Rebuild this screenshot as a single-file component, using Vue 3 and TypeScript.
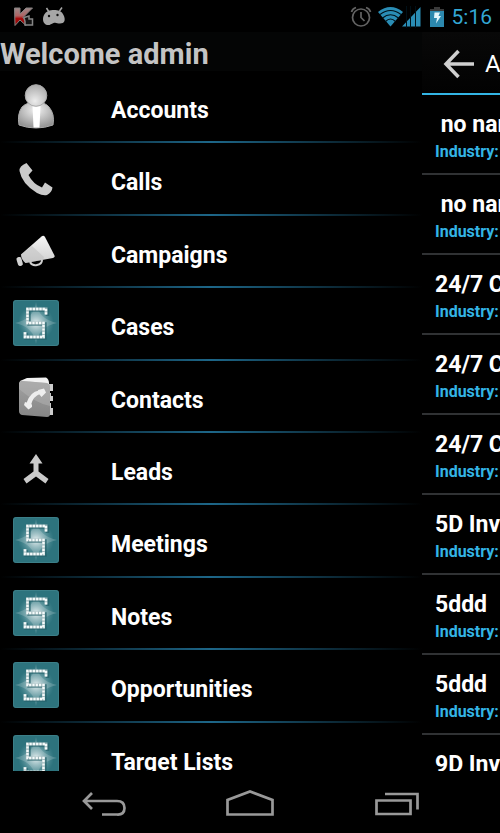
<script setup lang="ts">
interface MenuItem {
  label: string
  icon: 'person' | 'phone' | 'horn' | 'sugar' | 'book' | 'merge'
}

const menu: MenuItem[] = [
  { label: 'Accounts', icon: 'person' },
  { label: 'Calls', icon: 'phone' },
  { label: 'Campaigns', icon: 'horn' },
  { label: 'Cases', icon: 'sugar' },
  { label: 'Contacts', icon: 'book' },
  { label: 'Leads', icon: 'merge' },
  { label: 'Meetings', icon: 'sugar' },
  { label: 'Notes', icon: 'sugar' },
  { label: 'Opportunities', icon: 'sugar' },
  { label: 'Target Lists', icon: 'sugar' },
]

const accounts: string[] = [' no name', ' no name', '24/7 C', '24/7 C', '24/7 C', '5D Inv', '5ddd', '5ddd', '9D Inv']
</script>

<template>
  <div class="screen">
    <svg class="defs" width="0" height="0" aria-hidden="true">
      <defs>
        <linearGradient id="red" x1="0" y1="0" x2="0" y2="1">
          <stop offset="0" stop-color="#9c8a8a" /><stop offset=".45" stop-color="#b06464" /><stop offset=".6" stop-color="#a80c0c" /><stop offset="1" stop-color="#8c0808" />
        </linearGradient>
        <radialGradient id="head" cx=".45" cy=".75" r=".8">
          <stop offset="0" stop-color="#ececec" /><stop offset="1" stop-color="#a6a6a6" />
        </radialGradient>
        <radialGradient id="torso" cx=".5" cy=".3" r=".75">
          <stop offset="0" stop-color="#f2f2f2" /><stop offset="1" stop-color="#8c8c8c" />
        </radialGradient>
        <linearGradient id="cone" x1="0" y1="0" x2="0" y2="1">
          <stop offset="0" stop-color="#f6f6f6" /><stop offset="1" stop-color="#cfcfcf" />
        </linearGradient>
        <linearGradient id="cover" x1="0" y1="0" x2="0" y2="1">
          <stop offset="0" stop-color="#a2a2a2" /><stop offset="1" stop-color="#868686" />
        </linearGradient>
        <radialGradient id="glow">
          <stop offset="0" stop-color="#fff" stop-opacity=".85" /><stop offset=".5" stop-color="#d4e8ea" stop-opacity=".4" /><stop offset="1" stop-color="#7fb2b8" stop-opacity="0" />
        </radialGradient>
      </defs>
    </svg>

    <header class="status">
      <svg width="20" height="20" viewBox="0 0 20 20" aria-hidden="true">
        <path d="M.5 1H6V7L12 1H18.500L9 10.500 12 14V18.500L6 13 1 18.500Z" fill="url(#red)" stroke="#858080" />
        <path d="M10 10.500 15 9V12H18.500V18H11V14.500Z" fill="#111" stroke="#858585" stroke-width="1.500" />
      </svg>
      <svg width="24" height="20" viewBox="0 0 24 20" aria-hidden="true">
        <path d="M4.500 1 7 5M20 .5 17.500 4" stroke="#a6a6a6" stroke-width="1.500" />
        <path d="M2 8C4 4 8 3 12 3S20 4 21.500 8C24 13 22.500 16.500 18 16.500 15 16.500 14 15 11.500 16S8 18.500 5 18C1 17 0 12 2 8Z" fill="#a6a6a6" />
        <circle cx="7" cy="9" r="1.200" fill="#111" /><circle cx="15.500" cy="8" r="1.200" fill="#111" />
      </svg>
      <span class="spacer"></span>
      <svg width="22" height="22" viewBox="0 0 22 22" fill="none" stroke="#636363" stroke-width="1.700" aria-hidden="true">
        <circle cx="11" cy="11.500" r="8.500" /><path d="M11 6V11.500L14.500 15M1.500 6Q2.500 2.500 6 1.500M20.500 6Q19.500 2.500 16 1.500" />
      </svg>
      <svg class="wifi" width="45" height="22" viewBox="0 0 45 22" aria-hidden="true">
        <path d="M1 6Q13.500-4 26 6L13.500 20.500Z" fill="#2a8db5" />
        <path d="M3 8.500Q13.500.5 24 8.500M5.500 12Q13.500 5.500 21.500 12M8.500 15.500Q13.500 10.500 18.500 15.500" fill="none" stroke="#001018" stroke-width="1.100" />
        <path d="M25 20.500 43.500 1V20.500Z" fill="#2a8db5" />
        <path d="M29.500 0V22M33.500 0V22M38.500 0V22" stroke="#001018" stroke-width="1" />
      </svg>
      <svg width="14" height="22" viewBox="0 0 14 22" aria-hidden="true">
        <path d="M4 1H10V3H14V7H0V3H4Z" fill="#3a3a3a" /><path d="M0 5H14V21H0Z" fill="#2c88ae" />
        <path d="M4.500 6.500H10L8.500 10H11L6 17.500 7 12H4Z" fill="#e2f5fb" />
      </svg>
      <time class="clock">5:16</time>
    </header>

    <main class="body">
      <nav class="drawer" aria-label="Modules">
        <h1 class="welcome">Welcome admin</h1>
        <ul class="menu">
          <li v-for="item in menu" :key="item.label">
            <a class="menu-link" :href="'#' + item.label">
              <svg class="menu-icon" width="46" height="46" viewBox="0 0 46 46" aria-hidden="true">
                <g v-if="item.icon === 'person'">
                  <path d="M6 42Q4 31 9 24Q14 19 23 19T36 24Q42 31 40 42Q32 45 23 45T6 42Z" fill="url(#torso)" stroke="#aaa" />
                  <path d="M19.500 23H27.500L26.500 44.500H20.500Z" fill="#fff" />
                  <circle cx="23" cy="12.500" r="10.800" fill="url(#head)" stroke="#aaa" />
                </g>
                <path v-else-if="item.icon === 'phone'" d="M13.500 8 19.500 15.500 15.500 20Q20 29 29 32.500L32 27.500 39.500 32.500Q39 37 34 40Q30 41 24 38Q9 29 6.500 16Q6 11 13.500 8Z" fill="#cacaca" />
                <g v-else-if="item.icon === 'horn'">
                  <path d="M8 26.500 28.500 8.500Q30.500 7 32 9L41.500 27.500Q42 29.500 40 30L12.500 35Q8.500 32 8 26.500Z" fill="url(#cone)" />
                  <path d="M8 26.500 19 18 31 29 30 32 12.500 35Q8.500 32 8 26.500Z" fill="#bdbdbd" opacity=".5" />
                  <path d="M17 34Q19 38 24 37Q29 36 29 32" fill="none" stroke="#cfcfcf" stroke-width="2" />
                  <rect x="4" y="29" width="5" height="9" rx="2" fill="#d1d1d1" transform="rotate(-17 6.500 33)" />
                </g>
                <g v-else-if="item.icon === 'book'">
                  <path d="M7 8 14 5 33 4.500Q36 6 36 10V40H8Z" fill="#f1f1f1" />
                  <path d="M35 11H40V18H35ZM35 20H38V23H40V28H35ZM35 30H38V35H40V42H35Z" fill="#cdcdcd" />
                  <path d="M6 10Q7 7 10 8L34 10Q37 11 37 14V41Q37 44 34 44L9 42Q6 41 6 38Z" fill="url(#cover)" />
                  <path d="M6 16V10Q7 7 10 8L34 10Q37 11 37 14V33Q22 30 6 16Z" fill="#b7b7b7" opacity=".45" />
                  <path d="M12 29 19 31.500 19 34 15.500 36.500 11 32ZM13.500 30Q17 19 26 17.500L28 20.500Q20 23 18 32ZM25 17 31 15.500 33 19.500 28.500 24 26 21Z" fill="#eee" />
                </g>
                <path v-else-if="item.icon === 'merge'" d="M23 9 29.500 18.500H25.500V26.500L35.500 34 32.500 38.500 23 31.500 13.500 38.500 10.500 34 20.500 26.500V18.500H16.500Z" fill="#cacaca" />
                <g v-else>
                  <rect width="46" height="46" rx="3" fill="#2d737d" /><rect x=".5" y=".5" width="45" height="45" rx="3" fill="none" stroke="#3c7f88" />
                  <circle cx="23" cy="23" r="18" fill="url(#glow)" />
                  <path d="M23 2Q25 19 44 23Q25 27 23 44Q21 27 2 23Q21 19 23 2Z" fill="#fff" opacity=".18" />
                  <path d="M34.500 16V10H16V24H32V38H13V33" fill="none" stroke="#245f68" stroke-width="3.500" opacity=".7" />
                  <path d="M33 14.500V9H14.500V23H30.500V37H12V32" fill="none" stroke="#9fb8bb" stroke-width="3" />
                  <path d="M33 14.500V9H14.500V23H30.500V37H12V32" fill="none" stroke="#f4fafa" stroke-width="2.400" stroke-dasharray="2.200 1.100" />
                </g>
              </svg>
              <span>{{ item.label }}</span>
            </a>
          </li>
        </ul>
      </nav>

      <section class="panel" aria-label="Accounts">
        <div class="bar">
          <button class="back" type="button" aria-label="Back">
            <svg width="32" height="30" viewBox="0 0 32 30" fill="none" stroke="#d0d0d0" stroke-width="3.500">
              <path d="M15.500 2 3 15 15.500 28M3 15H31" />
            </svg>
          </button>
          <h2>Accounts</h2>
        </div>
        <ul class="accounts">
          <li v-for="(name, i) in accounts" :key="i">
            <strong>{{ name }}</strong>
            <span>Industry:</span>
          </li>
        </ul>
      </section>
    </main>

    <footer class="keys">
      <button type="button" aria-label="Back">
        <svg width="46" height="30" viewBox="0 0 46 30" fill="none" stroke="#999" stroke-width="2.700">
          <path d="M11 5 3 13 11 21M3 13H36Q43.500 13 43.500 20T36 26.500H21" />
        </svg>
      </button>
      <button type="button" aria-label="Home">
        <svg width="50" height="30" viewBox="0 0 50 30" fill="none" stroke="#999" stroke-width="2.700">
          <path d="M2.500 26.500V12L25 3.500 47.500 12V26.500Z" />
        </svg>
      </button>
      <button type="button" aria-label="Recent apps">
        <svg width="46" height="30" viewBox="0 0 46 30" fill="none" stroke="#999" stroke-width="2.700">
          <path d="M3.500 12.500H37.500V26H3.500ZM12 6H44.500V21.500" />
        </svg>
      </button>
    </footer>
  </div>
</template>

<style>
body {
  margin: 0;
  background: #000;
}
</style>

<style scoped>
.screen {
  display: flex;
  flex-direction: column;
  height: 100vh;
  overflow: hidden;
  background: #000;
  color: #fff;
  font-family: Roboto, "Liberation Sans", sans-serif;
}
.defs {
  position: absolute;
}
svg {
  display: block;
  flex: none;
}
h1, h2, ul {
  margin: 0;
  padding: 0;
}
ul {
  list-style: none;
}
button {
  padding: 0;
  border: 0;
  background: none;
}
.status {
  display: flex;
  flex: none;
  align-items: center;
  gap: 8px;
  box-sizing: border-box;
  height: 32px;
  padding: 2px 8px 0 14px;
}
.spacer {
  flex: 1;
}
.wifi {
  margin-left: -3px;
}
.clock {
  color: #33a7d4;
  font-size: 21px;
  line-height: 30px;
}
.body {
  display: flex;
  flex: 1;
  min-height: 0;
  overflow: hidden;
}
.drawer {
  flex: 1;
  min-width: 0;
}
.welcome {
  height: 39px;
  background: #040505;
  color: #c4c4c4;
  font-size: 29px;
  font-weight: 700;
  line-height: 44px;
}
.menu {
  display: grid;
  grid-auto-rows: 1fr;
  min-height: 724px;
}
.menu li {
  background: linear-gradient(90deg, transparent, #1d6688 50%, transparent) bottom / 100% 2px no-repeat;
}
.menu-link {
  display: flex;
  gap: 52px;
  padding: 12px 13px 0;
  color: #fff;
  font-size: 23px;
  font-weight: 700;
  line-height: 56px;
  text-decoration: none;
}
.panel {
  flex: none;
  width: 78px;
  overflow: hidden;
  white-space: nowrap;
}
.bar {
  display: flex;
  align-items: center;
  gap: 10px;
  box-sizing: border-box;
  height: 63px;
  padding: 3px 0 0 21px;
  border-bottom: 2px solid #33b5e5;
  background: linear-gradient(#080808, #020202);
}
.bar h2 {
  font-size: 24px;
  font-weight: 400;
}
.accounts li {
  box-sizing: border-box;
  height: 80px;
  padding: 16px 0 0 13px;
  border-bottom: 2px solid #303234;
}
.accounts strong,
.accounts span {
  display: block;
  font-weight: 700;
}
.accounts strong {
  font-size: 23px;
  line-height: 28px;
  white-space: pre;
}
.accounts span {
  color: #33b5e5;
  font-size: 16px;
  line-height: 26px;
}
.keys {
  display: flex;
  flex: none;
  align-items: center;
  justify-content: center;
  gap: 98px;
  box-sizing: border-box;
  height: 62px;
  padding-top: 2px;
}
</style>
